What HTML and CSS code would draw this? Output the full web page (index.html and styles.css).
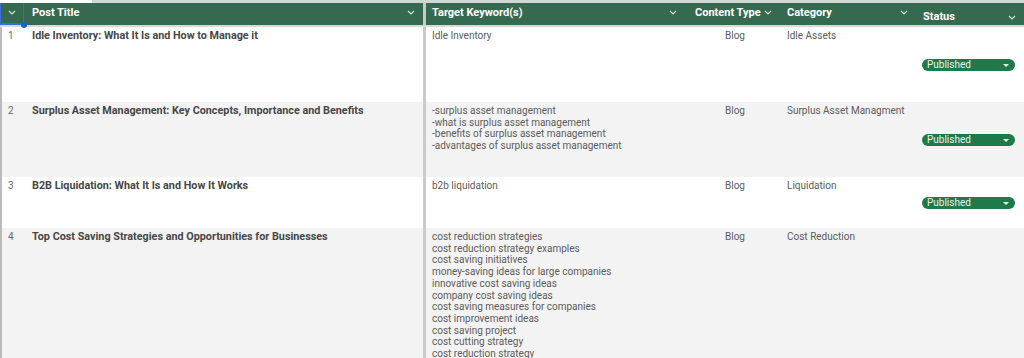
FILE: index.html
```html
<!DOCTYPE html>
<html>
<head>
<meta charset="utf-8">
<link rel="stylesheet" href="styles.css">
</head>
<body>
<div class="sheet">
  <div class="topstrip"></div>
  <div class="row head">
    <div class="cell corner"><svg class="chev" viewBox="0 0 8 5"><path d="M1 1 L4 4 L7 1"/></svg><span class="dot"></span></div>
    <div class="cell hc"><span>Post Title</span><svg class="chev" viewBox="0 0 8 5"><path d="M1 1 L4 4 L7 1"/></svg></div>
    <div class="divider"></div>
    <div class="cell hc"><span>Target Keyword(s)</span><svg class="chev" viewBox="0 0 8 5"><path d="M1 1 L4 4 L7 1"/></svg></div>
    <div class="cell hc"><span>Content Type</span><svg class="chev" viewBox="0 0 8 5"><path d="M1 1 L4 4 L7 1"/></svg></div>
    <div class="cell hc"><span>Category</span><svg class="chev" viewBox="0 0 8 5"><path d="M1 1 L4 4 L7 1"/></svg></div>
    <div class="cell hc status-h"><span>Status</span><svg class="chev" viewBox="0 0 8 5"><path d="M1 1 L4 4 L7 1"/></svg></div>
  </div>
  <div class="headline"></div>

  <div class="row r1">
    <div class="cell num">1</div>
    <div class="cell title">Idle Inventory: What It Is and How to Manage it</div>
    <div class="divider"></div>
    <div class="cell kw">Idle Inventory</div>
    <div class="cell type">Blog</div>
    <div class="cell cat">Idle Assets</div>
    <div class="cell stat"><span class="pill">Published<i class="tri"></i></span></div>
  </div>

  <div class="row r2 band">
    <div class="cell num">2</div>
    <div class="cell title">Surplus Asset Management: Key Concepts, Importance and Benefits</div>
    <div class="divider"></div>
    <div class="cell kw">-surplus asset management<br>-what is surplus asset management<br>-benefits of surplus asset management<br>-advantages of surplus asset management</div>
    <div class="cell type">Blog</div>
    <div class="cell cat">Surplus Asset Managment</div>
    <div class="cell stat"><span class="pill">Published<i class="tri"></i></span></div>
  </div>

  <div class="row r3">
    <div class="cell num">3</div>
    <div class="cell title">B2B Liquidation: What It Is and How It Works</div>
    <div class="divider"></div>
    <div class="cell kw">b2b liquidation</div>
    <div class="cell type">Blog</div>
    <div class="cell cat">Liquidation</div>
    <div class="cell stat"><span class="pill">Published<i class="tri"></i></span></div>
  </div>

  <div class="row r4 band">
    <div class="cell num">4</div>
    <div class="cell title">Top Cost Saving Strategies and Opportunities for Businesses</div>
    <div class="divider"></div>
    <div class="cell kw">cost reduction strategies<br>cost reduction strategy examples<br>cost saving initiatives<br>money-saving ideas for large companies<br>innovative cost saving ideas<br>company cost saving ideas<br>cost saving measures for companies<br>cost improvement ideas<br>cost saving project<br>cost cutting strategy<br>cost reduction strategy</div>
    <div class="cell type">Blog</div>
    <div class="cell cat">Cost Reduction</div>
    <div class="cell stat"></div>
  </div>
</div>
</body>
</html>
```

FILE: styles.css
```css
html, body {
  margin: 0;
  padding: 0;
  background: #ffffff;
  overflow: hidden;
}
body {
  font-family: Roboto, "Liberation Sans", Arial, sans-serif;
  width: 1024px;
  height: 358px;
}
.sheet {
  display: flex;
  flex-direction: column;
}
.topstrip {
  height: 3px;
  background: linear-gradient(to right, #ffffff 0, #ffffff 92px, #d4d6d5 92px, #d4d6d5 100%);
}
.row {
  display: grid;
  grid-template-columns: 24px 399px 3px 262px 92px 135px 109px;
}
.divider {
  background: #c9cbca;
}
.head {
  height: 22px;
  background: #366a50;
  color: #ffffff;
  font-weight: 700;
  font-size: 11px;
}
.headline {
  height: 2px;
  background: #d7dad8;
}
.cell {
  box-sizing: border-box;
}
.hc {
  display: flex;
  align-items: center;
  justify-content: space-between;
  padding: 0 8px 3px 8px;
}
.hc:nth-child(4) {
  padding-left: 6px;
  padding-right: 11px;
}
.hc:nth-child(5) {
  padding-left: 7px;
  padding-right: 8px;
}
.hc:nth-child(6) {
  padding-left: 7px;
  padding-right: 7px;
}
.status-h {
  padding: 5px 8px 0 8px;
}
.status-h .chev {
  margin-top: 2px;
}
.chev {
  width: 8px;
  height: 5px;
  flex: none;
}
.chev path {
  fill: none;
  stroke: #cfe0d6;
  stroke-width: 1.2;
}
.corner {
  position: relative;
  display: flex;
  align-items: center;
  justify-content: center;
  padding-bottom: 2px;
  border-left: 1px solid #3b6fd0;
  border-right: 1px solid #2f6fd6;
  border-bottom: 2px solid #2f6fd6;
}
.dot {
  position: absolute;
  right: -4px;
  bottom: -5px;
  width: 6px;
  height: 6px;
  border-radius: 50%;
  background: #1a5fd6;
  z-index: 2;
}
.r1 { height: 75px; }
.r2 { height: 75px; }
.r3 { height: 51px; }
.r4 { min-height: 140px; }
.band { background: #f3f3f3; }
.row:not(.head) .cell {
  padding-top: 3px;
  font-size: 10px;
  line-height: 11.7px;
  color: #5c5c5c;
}
.row:not(.head) .num {
  border-left: 2px solid #b9bcbb;
  padding-left: 6px;
  color: #6a6a6a;
}
.row:not(.head) .title {
  padding-left: 8px;
  font-weight: 700;
  font-size: 10.8px;
  color: #474747;
}
.row:not(.head) .kw {
  padding-left: 6px;
}
.row:not(.head) .type {
  text-align: center;
  padding-left: 2px;
}
.row:not(.head) .cat {
  padding-left: 7px;
}
.row:not(.head) .stat {
  display: flex;
  align-items: center;
  padding-top: 0;
  padding-left: 7px;
}
.pill {
  position: relative;
  display: flex;
  align-items: center;
  box-sizing: border-box;
  width: 93px;
  height: 12px;
  border-radius: 6px;
  background: #1f7a4b;
  color: #e6f4ea;
  font-size: 10px;
  line-height: 12px;
  padding-left: 5px;
}
.tri {
  position: absolute;
  right: 6px;
  top: 5px;
  width: 0;
  height: 0;
  border-left: 3px solid transparent;
  border-right: 3px solid transparent;
  border-top: 3px solid #e6f4ea;
}
```
